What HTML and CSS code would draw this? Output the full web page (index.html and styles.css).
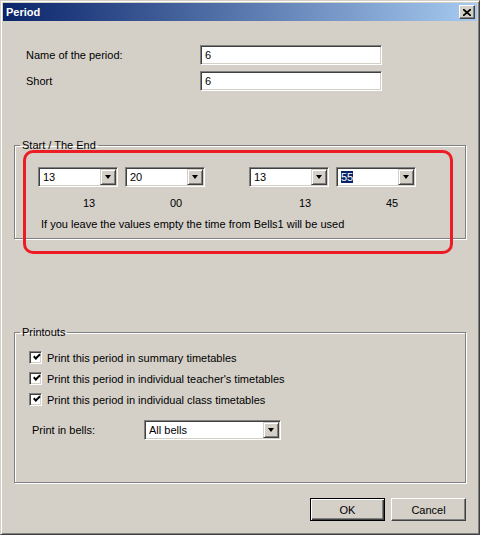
FILE: index.html
```html
<!DOCTYPE html>
<html lang="en">

<head>
    <meta charset="UTF-8">
    <title>Period</title>
    <link rel="stylesheet" href="styles.css">
</head>

<body>
    <div class="window">
        <div class="titlebar">
            <span class="title">Period</span>
            <span class="close">
                <svg width="8" height="7" viewBox="0 0 8 7">
                    <path d="M0 0 L8 7 M8 0 L0 7" stroke="#000" stroke-width="1.7" fill="none" />
                </svg>
            </span>
        </div>

        <div class="content">
            <div class="form">
                <label>Name of the period:</label>
                <div class="edit">6</div>
                <label>Short</label>
                <div class="edit">6</div>
            </div>

            <fieldset class="group group-time">
                <legend>Start / The End</legend>
                <div class="times">
                    <div class="combo"><span class="combo-text">13</span><span class="drop"></span></div>
                    <div class="combo"><span class="combo-text">20</span><span class="drop"></span></div>
                    <div class="combo combo-end"><span class="combo-text">13</span><span class="drop"></span></div>
                    <div class="combo"><span class="combo-text"><span class="selected">55</span></span><span class="drop"></span></div>
                </div>
                <div class="values">
                    <span class="value">13</span>
                    <span class="value">00</span>
                    <span class="value value-end">13</span>
                    <span class="value value-last">45</span>
                </div>
                <p class="note">If you leave the values empty the time from Bells1 will be used</p>
            </fieldset>

            <fieldset class="group group-print">
                <legend>Printouts</legend>
                <div class="checks">
                    <div class="check-row"><span class="check"></span>Print this period in summary timetables</div>
                    <div class="check-row"><span class="check"></span>Print this period in individual teacher's timetables</div>
                    <div class="check-row"><span class="check"></span>Print this period in individual class timetables</div>
                </div>
                <div class="bells">
                    <label>Print in bells:</label>
                    <div class="combo combo-wide"><span class="combo-text">All bells</span><span class="drop"></span></div>
                </div>
            </fieldset>

            <div class="buttons">
                <button class="btn btn-default">OK</button>
                <button class="btn">Cancel</button>
            </div>
        </div>

        <div class="annotation"></div>
    </div>
</body>

</html>
```

FILE: styles.css
```css
body {
    margin: 0;
    padding: 0;
    font-family: 'Liberation Sans', Arial, sans-serif;
    font-size: 11px;
    color: #000;
    background: #d4d0c8;
}

.window {
    position: relative;
    box-sizing: border-box;
    width: 480px;
    height: 535px;
    padding: 2px;
    background: #d4d0c8;
    border: 1px solid;
    border-color: #d4d0c8 #404040 #404040 #d4d0c8;
    box-shadow: inset 1px 1px 0 #fff, inset -1px -1px 0 #808080;
}

.titlebar {
    display: flex;
    align-items: center;
    justify-content: space-between;
    height: 18px;
    padding: 0 2px 0 3px;
    background: linear-gradient(to right, #0a246a, #a6caf0);
}

.title {
    color: #fff;
    font-weight: bold;
    font-size: 11px;
}

.close {
    display: flex;
    align-items: center;
    justify-content: center;
    box-sizing: border-box;
    width: 16px;
    height: 14px;
    background: #d4d0c8;
    border: 1px solid;
    border-color: #fff #404040 #404040 #fff;
    box-shadow: inset -1px -1px 0 #808080;
}

.content {
    padding: 24px 11px 11px 11px;
}

.form {
    display: grid;
    grid-template-columns: 174px 182px;
    row-gap: 6px;
    align-items: center;
    padding-left: 12px;
}

.edit {
    box-sizing: border-box;
    height: 20px;
    line-height: 18px;
    padding-left: 4px;
    background: #fff;
    border: 1px solid;
    border-color: #808080 #fff #fff #808080;
    box-shadow: inset 1px 1px 0 #404040, inset -1px -1px 0 #d4d0c8;
}

.group {
    margin: 0;
    padding: 0 0 0 5px;
    border: 1px solid #808080;
    box-shadow: 1px 1px 0 #fff, inset 1px 1px 0 #fff;
}

.group legend {
    padding: 0 2px;
    line-height: 13px;
}

.group-time {
    margin-top: 48px;
}

.times {
    display: flex;
    margin: 15px 0 0 18px;
}

.combo {
    box-sizing: border-box;
    display: flex;
    align-items: center;
    width: 80px;
    height: 20px;
    padding: 1px;
    margin-right: 7px;
    background: #fff;
    border: 1px solid;
    border-color: #808080 #fff #fff #808080;
    box-shadow: inset 1px 1px 0 #404040, inset -1px -1px 0 #d4d0c8;
}

.combo-end {
    margin-left: 37px;
}

.combo-wide {
    width: 137px;
    margin-right: 0;
}

.combo-text {
    flex: 1;
    padding-left: 3px;
    line-height: 16px;
}

.selected {
    background: #0a246a;
    color: #fff;
}

.drop {
    box-sizing: border-box;
    display: flex;
    align-items: center;
    justify-content: center;
    width: 16px;
    height: 16px;
    background: #d4d0c8;
    border: 1px solid;
    border-color: #d4d0c8 #404040 #404040 #d4d0c8;
    box-shadow: inset 1px 1px 0 #fff, inset -1px -1px 0 #808080;
}

.drop::after {
    content: "";
    width: 0;
    height: 0;
    border-left: 3.5px solid transparent;
    border-right: 3.5px solid transparent;
    border-top: 4px solid #000;
}

.values {
    display: flex;
    margin: 10px 0 0 18px;
    line-height: 13px;
}

.value {
    width: 87px;
    padding-left: 45px;
    box-sizing: border-box;
}

.value-end {
    margin-left: 37px;
    padding-left: 50px;
}

.value-last {
    padding-left: 50px;
}

.note {
    margin: 8px 0 7px 21px;
    line-height: 13px;
}

.group-print {
    margin-top: 87px;
    padding-bottom: 42px;
}

.checks {
    margin: 8px 0 0 9px;
}

.check-row {
    display: flex;
    align-items: center;
    height: 21px;
}

.check {
    position: relative;
    box-sizing: border-box;
    width: 13px;
    height: 13px;
    margin-right: 5px;
    background: #fff;
    border: 1px solid;
    border-color: #808080 #fff #fff #808080;
    box-shadow: inset 1px 1px 0 #404040, inset -1px -1px 0 #d4d0c8;
}

.check::after {
    content: "";
    position: absolute;
    left: 3px;
    top: 2px;
    width: 5px;
    height: 2px;
    border-left: 2px solid #000;
    border-bottom: 2px solid #000;
    transform: rotate(-45deg);
    transform-origin: 0 0;
    top: 5px;
}

.bells {
    display: flex;
    align-items: center;
    margin: 10px 0 0 12px;
}

.bells label {
    width: 112px;
}

.buttons {
    display: flex;
    justify-content: flex-end;
    gap: 6px;
    margin-top: 15px;
}

.btn {
    box-sizing: border-box;
    width: 75px;
    height: 23px;
    padding: 0;
    font-family: inherit;
    font-size: 11px;
    color: #000;
    background: #d4d0c8;
    border: 1px solid;
    border-color: #fff #404040 #404040 #fff;
    box-shadow: inset -1px -1px 0 #808080;
}

.btn-default {
    border: 1px solid #000;
    box-shadow: inset 1px 1px 0 #fff, inset -1px -1px 0 #404040, inset -2px -2px 0 #808080;
}

.annotation {
    position: absolute;
    left: 22px;
    top: 149px;
    box-sizing: border-box;
    width: 430px;
    height: 104px;
    border: 3px solid #ed1c24;
    border-radius: 10px;
    pointer-events: none;
}
```
